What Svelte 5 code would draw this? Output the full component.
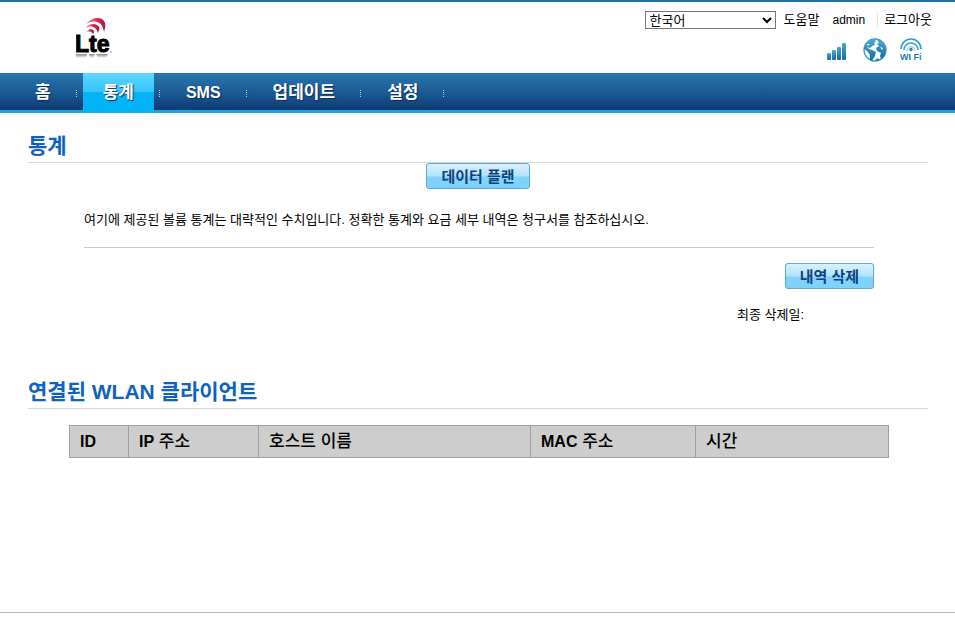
<script>
	let language = 'ko';

	const menu = [
		{ label: '홈', href: '#home' },
		{ label: '통계', href: '#statistics', active: true },
		{ label: 'SMS', href: '#sms', latin: true },
		{ label: '업데이트', href: '#update' },
		{ label: '설정', href: '#settings' }
	];

	let clients = [];
</script>

<div class="page">
	<header>
		<a class="logo" href="#home" aria-label="LTE">
			<svg width="44" height="48" viewBox="0 0 44 48">
				<defs>
					<linearGradient id="wave" x1="0" y1="0" x2="1" y2="0">
						<stop offset="0" stop-color="#eda3b3" />
						<stop offset="0.5" stop-color="#d8375a" />
						<stop offset="1" stop-color="#ad1438" />
					</linearGradient>
					<linearGradient id="mirror" x1="0" y1="0" x2="0" y2="1">
						<stop offset="0" stop-color="#888" />
						<stop offset="1" stop-color="#fff" />
					</linearGradient>
				</defs>
				<g fill="url(#wave)">
					<path d="M10 9C15 3 22 2 26 4C30 7 30 11 28 17C27 11 25 8 21 7C17 6 14 7 10 9Z" />
					<path d="M9 13C13 9 18 8 21 10C24 12 24 14 22 18C21 15 20 13 17 12C14 11 12 12 9 13Z" />
					<path d="M10 17C13 14 15 13 17 15C19 16 18 18 17 19C16 17 14 16 10 17Z" />
				</g>
				<text x="-1" y="37" class="mark">Lte</text>
				<path d="M0 39h11l-1 4H0zM13 39h6l-1 4h-4zM20 39h12l-2 4h-8z" fill="url(#mirror)" />
				<path d="M34 37h2" stroke="#999" />
			</svg>
		</a>
		<div class="tools">
			<div class="links">
				<select aria-label="언어" bind:value={language}>
					<option value="ko">한국어</option>
					<option value="en">English</option>
				</select>
				<a href="#help">도움말</a>
				<a class="user" href="#account">admin</a>
				<a class="logout" href="#logout">로그아웃</a>
			</div>
			<div class="status">
				<svg width="20" height="24" viewBox="0 0 20 24">
					<g fill="url(#blue)">
						<rect x="0" y="15" width="4" height="7" rx="1" />
						<rect x="5" y="12" width="4" height="10" rx="1" />
						<rect x="10" y="9" width="4" height="13" rx="1" />
						<rect x="15" y="5" width="4" height="17" rx="1" />
					</g>
				</svg>
				<svg width="24" height="24" viewBox="0 0 24 24">
					<defs>
						<linearGradient id="blue" x1="0" y1="0" x2="0" y2="1">
							<stop offset="0" stop-color="#4ba6d0" />
							<stop offset="1" stop-color="#126da5" />
						</linearGradient>
					</defs>
					<circle cx="12" cy="12" r="11" fill="#fff" stroke="#3c98c8" stroke-width="1.3" />
					<g fill="url(#blue)">
						<path d="M2 8C4 4 7 2 11 1L13 3L11 5L12 7L9 8L7 10L4 9L6 11L9 12L13 14L12 18L10 21L9 23L7 22L7 17L4 13L1 11Z" />
						<path d="M14 2L17 2C20 4 23 7 23 12C23 16 21 19 18 21L17 18L18 15L14 13L13 10L16 8L14 6L16 5Z" />
						<path d="M12 22L15 20L17 22L13 23Z" />
					</g>
					<path d="M17 9L20 10L19 12ZM4 6L7 6L5 8Z" fill="#fff" />
				</svg>
				<svg width="24" height="24" viewBox="0 0 24 24">
					<g fill="none" stroke="#3c9dcc" stroke-width="1.6">
						<path d="M2 11A10 10 0 0 1 22 11" />
						<path d="M5 12A7 7 0 0 1 19 12" />
						<path d="M8 13A4 4 0 0 1 16 13" opacity="0.4" />
					</g>
					<circle cx="12" cy="11.5" r="1.7" fill="#2787bb" />
					<text x="1" y="22" class="wifi">WI Fi</text>
				</svg>
			</div>
		</div>
	</header>

	<nav>
		<ul>
			{#each menu as item}
				<li>
					<a href={item.href} class:active={item.active} class:latin={item.latin}>{item.label}</a>
				</li>
			{/each}
		</ul>
	</nav>

	<main>
		<section>
			<h2>통계</h2>
			<div class="plan"><button type="button">데이터 플랜</button></div>
			<div class="inner">
				<p class="note">여기에 제공된 볼륨 통계는 대략적인 수치입니다. 정확한 통계와 요금 세부 내역은 청구서를 참조하십시오.</p>
				<div class="clear">
					<button type="button">내역 삭제</button>
					<p>최종 삭제일:</p>
				</div>
			</div>
		</section>

		<section>
			<h2>연결된 WLAN 클라이언트</h2>
			<div class="clients">
				<table>
					<colgroup>
						<col class="id" />
						<col class="ip" />
						<col class="host" />
						<col class="mac" />
						<col />
					</colgroup>
					<thead>
						<tr>
							<th><b>ID</b></th>
							<th><b>IP</b> 주소</th>
							<th>호스트 이름</th>
							<th><b>MAC</b> 주소</th>
							<th>시간</th>
						</tr>
					</thead>
					<tbody>
						{#each clients as client}
							<tr>
								<td>{client.id}</td>
								<td>{client.ip}</td>
								<td>{client.host}</td>
								<td>{client.mac}</td>
								<td>{client.time}</td>
							</tr>
						{/each}
					</tbody>
				</table>
			</div>
		</section>
	</main>

	<footer></footer>
</div>

<style>
	:global(body) {
		margin: 0;
		background: #fff;
	}

	.page {
		display: flex;
		flex-direction: column;
		min-height: 100vh;
		box-sizing: border-box;
		border-top: 2px solid #1f71a8;
		color: #000;
		font-family: "Liberation Sans", "Noto Sans CJK KR", sans-serif;
		font-size: 13px;
		line-height: 18px;
	}

	a {
		color: inherit;
		text-decoration: none;
	}

	header {
		display: flex;
		justify-content: space-between;
		height: 71px;
		padding: 0 23px 0 76px;
	}

	.logo {
		padding-top: 13px;
	}

	.mark {
		font-family: "Liberation Sans", sans-serif;
		font-size: 23px;
		font-weight: bold;
		stroke: #000;
		stroke-width: 1;
	}

	.tools {
		display: flex;
		flex-direction: column;
		align-items: flex-end;
		padding-top: 9px;
	}

	.links {
		display: flex;
		align-items: center;
	}

	.links select {
		width: 131px;
		height: 18px;
		margin-right: 8px;
		padding: 0;
		border: 1px solid #767676;
		border-radius: 0;
		background: #fff;
		color: #000;
		font: inherit;
		line-height: 16px;
	}

	.links .user {
		margin: 0 12px 0 13px;
		font-size: 12px;
	}

	.links .logout {
		padding-left: 6px;
		border-left: 1px solid #e4e4e4;
		line-height: 14px;
	}

	.status {
		display: flex;
		gap: 16px;
		padding: 9px 9px 0 0;
	}

	.status svg {
		display: block;
	}

	.status svg + svg + svg {
		margin-left: -4px;
	}

	.wifi {
		font-family: "Liberation Sans", sans-serif;
		font-size: 9px;
		font-weight: bold;
		fill: #1b7ab0;
	}

	nav {
		border-bottom: 3px solid #17a6dd;
		background: linear-gradient(#2777ad, #1c5c96 50%, #0c3a72);
	}

	nav ul {
		display: flex;
		margin: 0;
		padding: 0 0 0 15px;
		list-style: none;
	}

	nav li {
		display: flex;
		align-items: center;
	}

	nav li::after {
		content: "";
		width: 1px;
		height: 8px;
		margin: 4px 6px 0 5px;
		background: repeating-linear-gradient(#b5cde0 0 1px, transparent 1px 2px);
	}

	nav a {
		padding: 2px 20px 0;
		color: #fff;
		font-size: 17px;
		font-weight: bold;
		line-height: 35px;
		text-shadow: 1px 1px 1px #0a2f5c;
	}

	nav a.latin {
		font-size: 16px;
	}

	nav a.active {
		background: linear-gradient(#5fd5ff, #33c6fb 50%, #02b3f5 52%, #02b3f5);
		box-shadow: 0 3px #02b3f5;
	}

	main {
		flex: 1;
		padding: 17px 27px 0 28px;
	}

	section {
		margin-bottom: 52px;
	}

	h2 {
		margin: 0;
		border-bottom: 1px solid #d8d8d8;
		color: #0f62bd;
		font-size: 21px;
		line-height: 32px;
	}

	button {
		height: 26px;
		padding: 2px 14px 0;
		border: 1px solid #5aaad2;
		border-radius: 3px;
		background: linear-gradient(#d9f1fe, #b2e3fc 50%, #83d2f9 54%, #7ed3fb);
		color: #0d4380;
		font-family: inherit;
		font-size: 15px;
		font-weight: bold;
		line-height: 22px;
		cursor: pointer;
	}

	.plan {
		display: flex;
		justify-content: center;
	}

	.inner {
		padding: 0 54px 0 56px;
	}

	p {
		margin: 0;
	}

	.note {
		padding: 22px 0 18px;
		border-bottom: 1px solid #c8c8c8;
	}

	.clear {
		display: flex;
		flex-direction: column;
		align-items: flex-end;
		padding-top: 15px;
	}

	.clear p {
		width: 137px;
		padding-top: 17px;
	}

	.clients {
		padding: 16px 39px 0 41px;
	}

	table {
		width: 100%;
		border-collapse: collapse;
		table-layout: fixed;
	}

	.id {
		width: 59px;
	}

	.ip {
		width: 130px;
	}

	.host {
		width: 272px;
	}

	.mac {
		width: 165px;
	}

	th,
	td {
		padding: 0 10px;
		border: 1px solid #a0a0a0;
		text-align: left;
		line-height: 31px;
	}

	th {
		background: #cdcdcd;
		font-size: 17px;
		font-weight: 500;
	}

	th b {
		font-size: 16px;
	}

	footer {
		height: 22px;
		border-top: 1px solid #b8b8b8;
	}
</style>
